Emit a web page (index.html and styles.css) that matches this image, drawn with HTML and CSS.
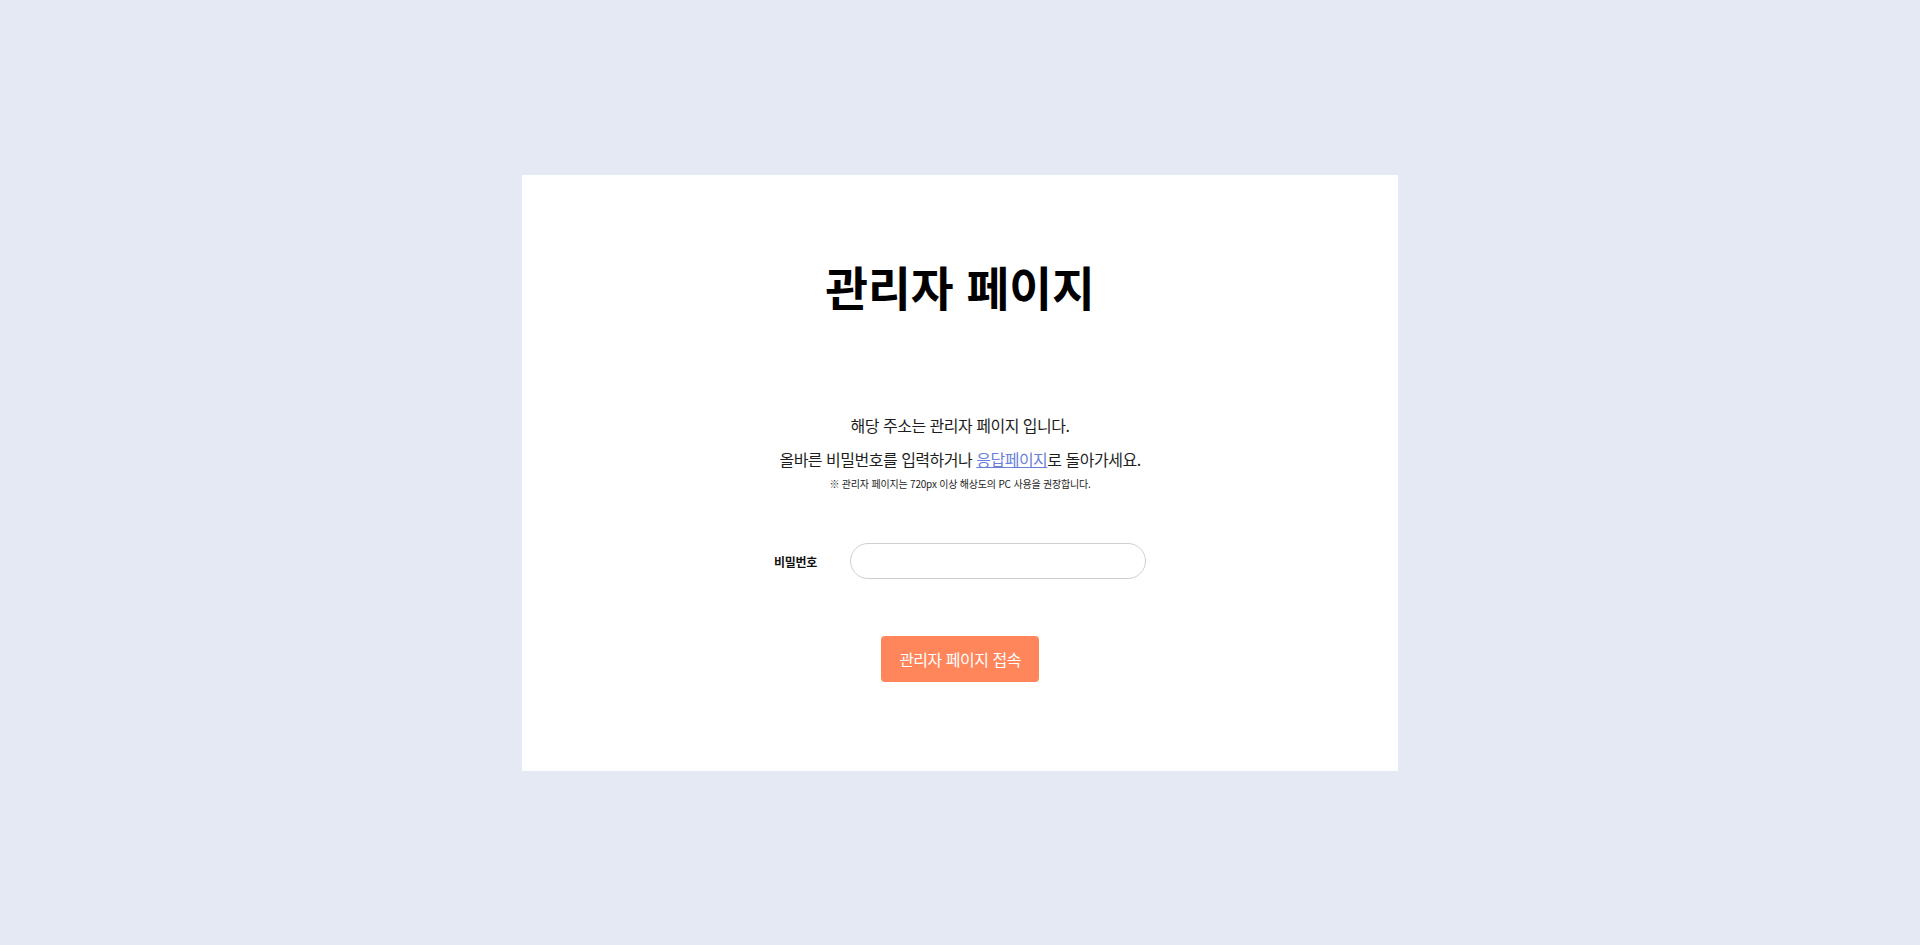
FILE: index.html
```html
<!DOCTYPE html>
<html lang="ko">
<head>
<meta charset="utf-8">
<title>관리자 페이지</title>
<link rel="stylesheet" href="styles.css">
</head>
<body>
<main class="page">
  <section class="card">
    <h1 class="title">관리자 페이지</h1>
    <div class="desc">
      <p class="desc-line">해당 주소는 관리자 페이지 입니다.</p>
      <p class="desc-line">올바른 비밀번호를 입력하거나 <a class="link" href="#">응답페이지</a>로 돌아가세요.</p>
      <p class="note"><span class="mark">※</span> 관리자 페이지는 720px 이상 해상도의 PC 사용을 권장합니다.</p>
    </div>
    <form class="form">
      <div class="field">
        <label class="label" for="pw">비밀번호</label>
        <input class="input" id="pw" type="password">
      </div>
      <button class="btn" type="button">관리자 페이지 접속</button>
    </form>
  </section>
</main>
</body>
</html>
```
FILE: styles.css
```css
* { box-sizing: border-box; }
html, body { margin: 0; padding: 0; }
body {
  background: #e4e9f4;
  font-family: "Noto Sans CJK KR", "Noto Sans", sans-serif;
  color: #222;
}
.page {
  min-height: 945px;
  display: flex;
  align-items: center;
  justify-content: center;
}
.card {
  width: 876px;
  height: 596px;
  background: #fff;
  padding-top: 81px;
  display: flex;
  flex-direction: column;
  align-items: center;
}
.title {
  margin: 0;
  font-size: 46.5px;
  line-height: 60px;
  font-weight: 700;
  color: #000;
}
.desc {
  margin-top: 92.5px;
  text-align: center;
}
.desc-line {
  margin: 0;
  font-size: 16px;
  line-height: 34px;
  letter-spacing: -0.5px;
  color: #1e1e1e;
}
.link {
  color: #6a7fd9;
  text-decoration: underline;
}
.note {
  margin: 0.5px 0 0;
  font-size: 10px;
  line-height: 14px;
  color: #1e1e1e;
  letter-spacing: -0.2px;
}
.mark {
  font-family: "Noto Sans CJK KR", sans-serif;
  font-variant-emoji: text;
  color: #333;
}
.form {
  margin-top: 52.5px;
  display: flex;
  flex-direction: column;
  align-items: center;
}
.field {
  display: flex;
  align-items: center;
  width: 372px;
}
.label {
  width: 76px;
  font-size: 12px;
  font-weight: 700;
  color: #111;
  letter-spacing: -0.3px;
}
.input {
  width: 296px;
  height: 36px;
  border: 1px solid #cfcfcf;
  border-radius: 18px;
  padding: 0 16px;
  outline: none;
  background: #fff;
  font-size: 14px;
}
.btn {
  margin-top: 57px;
  width: 158px;
  height: 46px;
  border: 0;
  border-radius: 4px;
  background: #ff865a;
  color: #fff;
  font-family: inherit;
  font-size: 16px;
  letter-spacing: -0.5px;
  cursor: pointer;
}
```
